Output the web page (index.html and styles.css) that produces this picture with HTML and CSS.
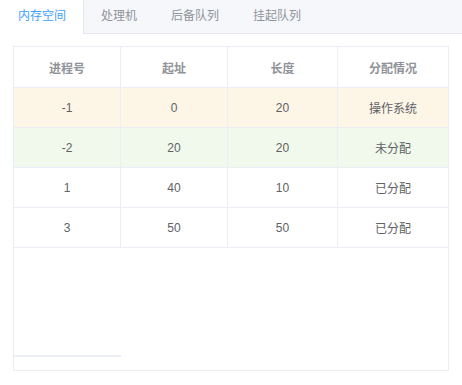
FILE: index.html
```html
<!DOCTYPE html>
<html lang="zh-CN">

<head>
    <meta charset="utf-8">
    <title>内存空间</title>
    <link rel="stylesheet" href="styles.css">
</head>

<body>
    <div class="tabs">
        <div class="tab active">内存空间</div>
        <div class="tab">处理机</div>
        <div class="tab">后备队列</div>
        <div class="tab">挂起队列</div>
    </div>
    <div class="content">
        <div class="table-box">
            <div class="table">
                <div class="th">进程号</div>
                <div class="th">起址</div>
                <div class="th">长度</div>
                <div class="th">分配情况</div>

                <div class="td warning">-1</div>
                <div class="td warning">0</div>
                <div class="td warning">20</div>
                <div class="td warning">操作系统</div>

                <div class="td success">-2</div>
                <div class="td success">20</div>
                <div class="td success">20</div>
                <div class="td success">未分配</div>

                <div class="td">1</div>
                <div class="td">40</div>
                <div class="td">10</div>
                <div class="td">已分配</div>

                <div class="td">3</div>
                <div class="td">50</div>
                <div class="td">50</div>
                <div class="td">已分配</div>
            </div>
            <div class="scroll-bar"></div>
        </div>
    </div>
</body>

</html>
```

FILE: styles.css
```css
* {
    padding: 0;
    margin: 0;
    box-sizing: border-box;
}

body {
    background-color: #ffffff;
    font-family: "Liberation Sans", "Noto Sans CJK SC", sans-serif;
    font-size: 12px;
    color: #606266;
}

.tabs {
    display: flex;
    height: 34px;
    background-color: #f5f7fa;
    border-bottom: 1px solid #e4e7ed;
}

.tab {
    height: 34px;
    line-height: 33px;
    padding: 0 17px;
    color: #909399;
}

.tab.active {
    padding-left: 18px;
    background-color: #ffffff;
    color: #409eff;
    border-right: 1px solid #e4e7ed;
}

.content {
    padding: 12px 13px 0 13px;
}

.table-box {
    position: relative;
    height: 325px;
    border: 1px solid #ebeef5;
}

.table {
    display: grid;
    grid-template-columns: 107px 107px 110px 1fr;
}

.th,
.td {
    display: flex;
    align-items: center;
    justify-content: center;
    border-right: 1px solid #ebeef5;
    border-bottom: 1px solid #ebeef5;
}

.th:nth-child(4n),
.td:nth-child(4n) {
    border-right: none;
}

.th {
    height: 41px;
    color: #909399;
    font-weight: bold;
}

.td {
    height: 40px;
}

.warning {
    background-color: #fdf5e6;
}

.success {
    background-color: #f0f9eb;
}

.scroll-bar {
    position: absolute;
    left: 0;
    bottom: 13px;
    width: 107px;
    height: 2px;
    background-color: #ebeef5;
}
```
